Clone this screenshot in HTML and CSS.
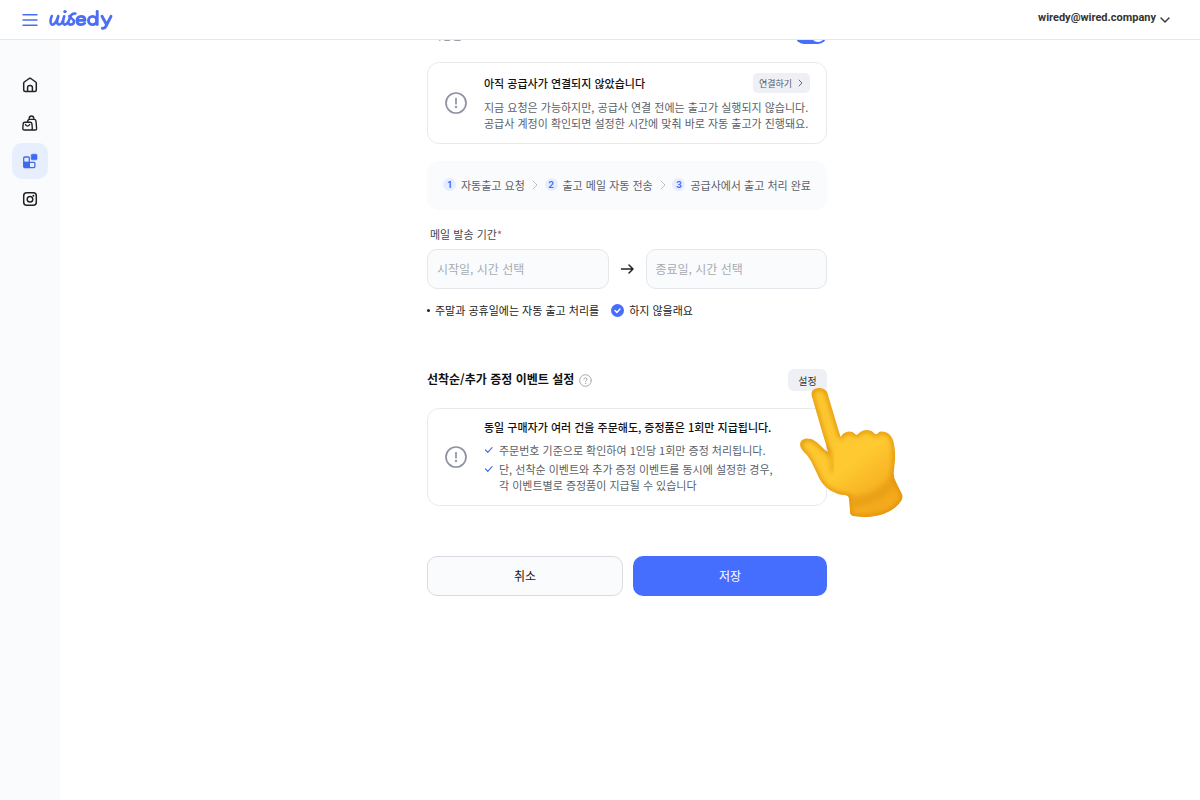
FILE: index.html
```html
<!DOCTYPE html>
<html lang="ko">
<head>
    <meta charset="UTF-8">
    <meta name="viewport" content="width=device-width, initial-scale=1.0">
    <title>Wiredy</title>
    <link rel="stylesheet" href="styles.css">
</head>
<body>
    <header class="header">
        <button type="button" class="icon-btn" aria-label="메뉴">
            <svg width="16" height="14" viewBox="0 0 16 14" fill="none" stroke="#4a6ef5" stroke-width="1.4" stroke-linecap="round"><path d="M1 1.7h14M1 7h14M1 12.3h14"/></svg>
        </button>
        <a href="#" class="logo" aria-label="wiredy">
            <svg width="66" height="24" viewBox="0 0 66 24" fill="none" stroke="#4a6ef5" stroke-width="2.9" stroke-linecap="round" stroke-linejoin="round">
                <path d="M3.8 8C2.6 10.5 1.8 14.8 3.4 16.2C5.5 17.8 8.4 14.5 10.3 8.2C8.8 12.5 8.6 16 10.6 16.5C13.2 17 15.2 12.5 16.2 8.2C15 11.5 14.5 15.9 16.3 16.5C18.7 17.2 21.2 12.5 22 9.500C22.700 7 24 5.300 27.400 5.500" stroke-width="2.600"/>
                <path d="M21.300 8.200C22.200 10.200 26.300 11 26 13.800C25.700 16.800 21 17.700 20.300 14.800" stroke-width="2.600"/>
                <circle cx="17" cy="3.600" r="1.700" fill="#4a6ef5" stroke="none"/>
                <path d="M29 12.400H37C37 9.800 35.300 8.400 33 8.400C30.600 8.400 29 10.100 29 12.500C29 15 30.600 16.600 33.100 16.600C34.600 16.600 35.700 16.100 36.600 15.200"/>
                <circle cx="44.600" cy="12.500" r="4.100"/>
                <path d="M49.200 3.500V16.600"/>
                <path d="M54 8.300L58.400 16.300M63 8.300L57.800 18.500C57 20 55.800 20.600 54.400 20.300"/>
            </svg>
        </a>
        <button type="button" class="account">
            wiredy@wired.company
            <svg width="10" height="6" viewBox="0 0 10 6" fill="none" stroke="#333" stroke-width="1.4" stroke-linecap="round" stroke-linejoin="round"><path d="M1 1l4 4 4-4"/></svg>
        </button>
    </header>

    <div class="layout">
        <nav class="sidebar">
            <a href="#" class="nav-item" aria-label="홈">
                <svg width="16" height="16" viewBox="0 0 16 16" fill="none" stroke="#222" stroke-width="1.5" stroke-linejoin="round"><path d="M1.7 6.2Q1.7 5.5 2.3 5L7.2 1.5Q8 1 8.8 1.5L13.7 5Q14.3 5.5 14.3 6.2V13Q14.3 14.5 12.8 14.5H3.2Q1.7 14.5 1.7 13Z"/><path d="M5.6 14.5V10.5Q5.6 8.4 8 8.4T10.4 10.5V14.5"/></svg>
            </a>
            <a href="#" class="nav-item" aria-label="상품">
                <svg width="16" height="16" viewBox="0 0 16 16" fill="none" stroke="#222" stroke-width="1.4" stroke-linecap="round" stroke-linejoin="round"><path d="M10 15H13.2Q14.8 15 14.6 13.4L14 6.2Q13.8 4.4 12 4.4H7.6Q5.7 4.4 5.5 6.8"/><path d="M7.2 4.2V3.2Q7.4 1 9.500 1T11.800 3.200V4.200"/><path d="M2.800 7.200H8.300Q9.700 7.200 9.900 8.600L10.300 13.300Q10.400 15 8.800 15H2.300Q.7 15 .8 13.300L1.200 8.600Q1.300 7.200 2.800 7.200Z"/><path d="M3.500 9.600Q5.500 12.600 7.600 9.600"/></svg>
            </a>
            <a href="#" class="nav-item active" aria-label="이벤트">
                <svg width="16" height="16" viewBox="0 0 16 16" fill="none" stroke="#4069f2" stroke-width="1.3"><rect x="1.7" y="4" width="5.6" height="5.3" rx="1"/><rect x="7.3" y="9.3" width="5.6" height="5.3" rx="1"/><path d="M1.7 9.3H7.3V14.6H2.7Q1.7 14.6 1.7 13.6Z" fill="#4069f2"/><rect x="9.2" y="1.2" width="5.8" height="5.6" rx="1" fill="#4069f2" stroke-width=".6"/></svg>
            </a>
            <a href="#" class="nav-item" aria-label="인스타그램">
                <svg width="16" height="16" viewBox="0 0 16 16" fill="none" stroke="#222" stroke-width="1.5"><rect x="1.7" y="1.7" width="12.6" height="12.6" rx="3"/><circle cx="8" cy="8.2" r="2.8"/><circle cx="11.4" cy="4.7" r="1" fill="#222" stroke="none"/></svg>
            </a>
        </nav>

        <main class="main">
            <form class="content">
                <div class="toggle-row">
                    <label for="auto-use">사용함</label>
                    <input type="checkbox" id="auto-use" class="toggle" checked>
                </div>

                <section class="card notice">
                    <svg class="alert-icon" width="24" height="24" viewBox="0 0 24 24" fill="none" stroke="#8d92a3" stroke-width="1.7" stroke-linecap="round"><circle cx="12" cy="12" r="10"/><path d="M12 7.5V12.7"/><circle cx="12" cy="16" r=".4"/></svg>
                    <div class="card-body">
                        <div class="card-head">
                            <h3>아직 공급사가 연결되지 않았습니다</h3>
                            <button type="button" class="connect-btn">연결하기
                                <svg width="5" height="8" viewBox="0 0 5 8" fill="none" stroke="#666b78" stroke-linecap="round" stroke-linejoin="round"><path d="M1 1l3 3-3 3"/></svg>
                            </button>
                        </div>
                        <p>지금 요청은 가능하지만, 공급사 연결 전에는 출고가 실행되지 않습니다.<br>공급사 계정이 확인되면 설정한 시간에 맞춰 바로 자동 출고가 진행돼요.</p>
                    </div>
                </section>

                <ol class="steps">
                    <li><span class="num">1</span>자동출고 요청</li>
                    <li class="arrow" aria-hidden="true"><svg width="6" height="10" viewBox="0 0 6 10" fill="none" stroke="#b9bdc8" stroke-linecap="round" stroke-linejoin="round"><path d="M1 1l4 4-4 4"/></svg></li>
                    <li><span class="num">2</span>출고 메일 자동 전송</li>
                    <li class="arrow" aria-hidden="true"><svg width="6" height="10" viewBox="0 0 6 10" fill="none" stroke="#b9bdc8" stroke-linecap="round" stroke-linejoin="round"><path d="M1 1l4 4-4 4"/></svg></li>
                    <li><span class="num">3</span>공급사에서 출고 처리 완료</li>
                </ol>

                <label class="field-label" for="start-date">메일 발송 기간<span class="required">*</span></label>
                <div class="period">
                    <input type="text" id="start-date" placeholder="시작일, 시간 선택">
                    <svg width="15" height="12" viewBox="0 0 15 12" fill="none" stroke="#222" stroke-width="1.5" stroke-linecap="round" stroke-linejoin="round"><path d="M1.500 6h11.500M9 2L13 6 9 10"/></svg>
                    <input type="text" id="end-date" placeholder="종료일, 시간 선택" aria-label="종료일, 시간">
                </div>

                <div class="holiday">
                    <span class="dot"></span>
                    <span>주말과 공휴일에는 자동 출고 처리를</span>
                    <label class="check-label">
                        <span class="check-box">
                            <input type="checkbox" checked>
                            <svg width="13" height="13" viewBox="0 0 13 13" fill="none" stroke="#fff" stroke-width="1.4" stroke-linecap="round" stroke-linejoin="round"><path d="M4 6.600l1.800 1.800 3.200-3.400"/></svg>
                        </span>
                        하지 않을래요
                    </label>
                </div>

                <div class="section-head">
                    <h2>선착순/추가 증정 이벤트 설정</h2>
                    <svg width="13" height="13" viewBox="0 0 13 13" fill="none" stroke="#a6a9b0" stroke-linecap="round"><circle cx="6.5" cy="6.5" r="5.8"/><path d="M4.9 5.2Q5 3.800 6.500 3.800T8.100 5.200Q8.100 6 7.200 6.500Q6.500 6.900 6.500 7.600"/><circle cx="6.500" cy="9.500" r=".2"/></svg>
                    <div class="setting">
                        <button type="button" class="setting-btn">설정</button>
                        <svg class="hand" width="106" height="132" viewBox="0 0 106 132" aria-hidden="true">
                            <defs>
                                <linearGradient id="skin" x1="0" y1="0" x2=".6" y2="1">
                                    <stop offset="0" stop-color="#fcc62e"/>
                                    <stop offset=".65" stop-color="#fec931"/>
                                    <stop offset="1" stop-color="#f4aa1c"/>
                                </linearGradient>
                                <filter id="soft" x="-20%" y="-20%" width="140%" height="140%"><feGaussianBlur stdDeviation="2.5"/></filter>
                                <path id="hand-path" d="M13 10C11 4 15 1 20 1C25 1 28 3 29 8L41 48Q42 51 43 48C46 44 53 43 56 47Q58 49 60 46C64 42 72 42 75 46Q77 49 80 45C88 43 94 49 95 57C97 67 96 75 95 83Q94 90 97 95L103 107Q105 112 100 117C89 129 70 132 54 129Q51 128 51 125L50 112Q50 108 44 108C35 107 25 101 20 91C15 80 12 73 7 67Q1 62 1 57C2 51 10 50 16 54C22 58 25 63 29 65Q27 57 24 48Z"/>
                                <clipPath id="hand-shape"><use href="#hand-path"/></clipPath>
                            </defs>
                            <g clip-path="url(#hand-shape)">
                                <use href="#hand-path" fill="url(#skin)"/>
                                <use href="#hand-path" fill="none" stroke="#dd8a06" stroke-width="3.5" filter="url(#soft)"/>
                                <path d="M50 108Q76 112 94 86L98 96Q88 114 53 122Z" fill="#e0910d" opacity=".5" filter="url(#soft)"/>
                                <path d="M28 62Q35 75 33 85" fill="none" stroke="#d98400" stroke-width="3" opacity=".6" filter="url(#soft)"/>
                            </g>
                        </svg>
                    </div>
                </div>

                <section class="card event">
                    <svg class="alert-icon" width="24" height="24" viewBox="0 0 24 24" fill="none" stroke="#8d92a3" stroke-width="1.7" stroke-linecap="round"><circle cx="12" cy="12" r="10"/><path d="M12 7.5V12.7"/><circle cx="12" cy="16" r=".4"/></svg>
                    <div class="card-body">
                        <h3>동일 구매자가 여러 건을 주문해도, 증정품은 1회만 지급됩니다.</h3>
                        <ul class="check-list">
                            <li><svg width="10" height="8" viewBox="0 0 10 8" fill="none" stroke="#4a6ef5" stroke-width="1.2" stroke-linecap="round" stroke-linejoin="round"><path d="M1.500 4l2.300 2.300 4.200-4.600"/></svg><span>주문번호 기준으로 확인하여 1인당 1회만 증정 처리됩니다.</span></li>
                            <li><svg width="10" height="8" viewBox="0 0 10 8" fill="none" stroke="#4a6ef5" stroke-width="1.2" stroke-linecap="round" stroke-linejoin="round"><path d="M1.500 4l2.300 2.300 4.200-4.600"/></svg><span>단, 선착순 이벤트와 추가 증정 이벤트를 동시에 설정한 경우,<br>각 이벤트별로 증정품이 지급될 수 있습니다</span></li>
                        </ul>
                    </div>
                </section>

                <div class="actions">
                    <button type="button" class="cancel">취소</button>
                    <button type="submit" class="save">저장</button>
                </div>
            </form>
        </main>
    </div>
</body>
</html>
```

FILE: styles.css
```css
* {
    box-sizing: border-box;
}
body {
    margin: 0;
    font-family: "Noto Sans CJK KR", sans-serif;
    font-size: 11px;
    line-height: 16px;
    color: #222;
    background-color: #fff;
}
h2, h3, p, ul, ol {
    margin: 0;
    padding: 0;
    list-style: none;
}
button, input {
    font-family: inherit;
    margin: 0;
}
button {
    border: none;
    padding: 0;
    cursor: pointer;
}
svg {
    display: block;
    flex-shrink: 0;
}

/* header */
.header {
    position: sticky;
    top: 0;
    z-index: 10;
    display: flex;
    align-items: center;
    height: 40px;
    padding: 0 30px 0 22px;
    background-color: #fff;
    border-bottom: 1px solid #e6e8eb;
}
.icon-btn {
    background: none;
}
.logo {
    margin-left: 10px;
}
.account {
    display: flex;
    align-items: center;
    gap: 4px;
    margin-left: auto;
    padding-bottom: 4px;
    background: none;
    font-family: Roboto, sans-serif;
    font-size: 11px;
    font-weight: 700;
    color: #333;
}
.account svg {
    margin-top: 4px;
}

/* layout */
.layout {
    display: flex;
    min-height: calc(100vh - 40px);
}
.sidebar {
    display: flex;
    flex-direction: column;
    align-items: center;
    gap: 2px;
    width: 60px;
    padding-top: 27px;
    background-color: #fafbfd;
}
.nav-item {
    display: flex;
    align-items: center;
    justify-content: center;
    width: 36px;
    height: 36px;
    border-radius: 10px;
}
.nav-item.active {
    background-color: #e7eefe;
}
.main {
    flex: 1;
    padding: 0 6px 40px 0;
}
.content {
    width: 400px;
    max-width: 100%;
    margin: -13px auto 0;
}

/* toggle */
.toggle-row {
    display: flex;
    align-items: center;
    justify-content: space-between;
    height: 16px;
    margin-bottom: 19px;
    padding-left: 5px;
    color: #888c94;
}
.toggle {
    appearance: none;
    display: flex;
    align-items: center;
    justify-content: flex-end;
    width: 32px;
    height: 18px;
    padding: 2px;
    border-radius: 9px;
    background-color: #456eff;
}
.toggle::after {
    content: "";
    width: 14px;
    height: 14px;
    border-radius: 50%;
    background-color: #fff;
}

/* cards */
.card {
    display: flex;
    align-items: center;
    gap: 16px;
    padding: 0 16px;
    border: 1px solid #e8eaee;
    border-radius: 12px;
    background-color: #fff;
}
.card h3 {
    font-size: 11px;
    font-weight: 500;
    color: #111;
}
.card-body {
    flex: 1;
    padding-bottom: 2px;
    color: #5b5f68;
    white-space: nowrap;
}
.card-head {
    display: flex;
    align-items: center;
    justify-content: space-between;
    margin-bottom: 6px;
}
.notice {
    height: 82px;
}
.connect-btn {
    display: flex;
    align-items: center;
    gap: 6px;
    height: 20px;
    padding: 0 7px 0 6px;
    border-radius: 5px;
    background-color: #eff0f6;
    font-size: 9px;
    color: #555963;
}

/* steps */
.steps {
    display: flex;
    align-items: center;
    justify-content: space-between;
    height: 49px;
    margin-top: 17px;
    padding: 0 16px 2px;
    border-radius: 12px;
    background-color: #fafbfd;
    color: #5b5f68;
    white-space: nowrap;
}
.steps li {
    display: flex;
    align-items: center;
    gap: 5px;
}
.num {
    width: 13px;
    height: 13px;
    border-radius: 50%;
    background-color: #e7edff;
    font-family: Inter, sans-serif;
    font-size: 9px;
    font-weight: 700;
    line-height: 13px;
    text-align: center;
    color: #456eff;
}

/* period */
.field-label {
    display: block;
    margin-top: 16px;
    padding-left: 3px;
    color: #444851;
}
.required {
    color: #f5365c;
}
.period {
    display: flex;
    align-items: center;
    gap: 11px;
    margin-top: 7px;
}
.period input {
    flex: 1;
    min-width: 0;
    height: 40px;
    padding: 0 9px 2px;
    border: 1px solid #e3e6ea;
    border-radius: 10px;
    background-color: #fafbfd;
    font-size: 12px;
}
.period input::placeholder {
    color: #a8abb1;
}
.holiday {
    display: flex;
    align-items: center;
    margin-top: 13px;
}
.dot {
    width: 3px;
    height: 3px;
    margin-right: 5px;
    border-radius: 50%;
    background-color: #222;
}
.check-label {
    display: flex;
    align-items: center;
    gap: 5px;
    margin-left: 12px;
}
.check-box {
    display: grid;
}
.check-box input,
.check-box svg {
    grid-area: 1 / 1;
}
.check-box input {
    appearance: none;
    width: 13px;
    height: 13px;
    border-radius: 50%;
    background-color: #456eff;
}
.check-box svg {
    z-index: 1;
    pointer-events: none;
}

/* event section */
.section-head {
    display: flex;
    align-items: center;
    gap: 5px;
    margin-top: 51px;
}
.section-head h2 {
    padding-bottom: 2px;
    font-size: 12px;
    font-weight: 700;
    color: #111;
}
.setting {
    position: relative;
    margin-left: auto;
}
.setting-btn {
    display: block;
    width: 39px;
    height: 22px;
    border-radius: 6px;
    background-color: #eff0f6;
    font-size: 10px;
    color: #333;
}
.hand {
    position: absolute;
    top: 18px;
    left: 11px;
    z-index: 2;
    pointer-events: none;
}
.event {
    height: 98px;
    margin-top: 17px;
}
.check-list {
    display: flex;
    flex-direction: column;
    gap: 3px;
    margin-top: 7px;
}
.check-list li {
    display: flex;
    gap: 5px;
}
.check-list svg {
    margin-top: 4px;
}

/* buttons */
.actions {
    display: flex;
    gap: 10px;
    margin-top: 50px;
}
.actions button {
    flex: 1 1 0;
    height: 40px;
    padding-bottom: 2px;
    border-radius: 10px;
    font-size: 12px;
}
.cancel {
    border: 1px solid #d8dbe0;
    background-color: #fafbfd;
    color: #222;
}
.save {
    background-color: #456eff;
    color: #fff;
}
```
